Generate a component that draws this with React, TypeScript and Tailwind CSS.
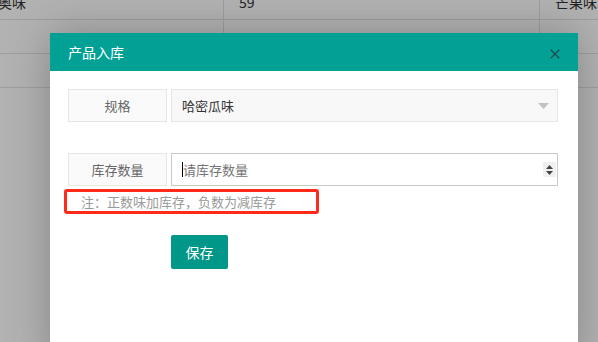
import React from 'react';
import { X } from 'lucide-react';

const font = { fontFamily: '"Noto Sans CJK SC", "Noto Sans", sans-serif' };

const App: React.FC = () => {
  return (
    <div className="relative w-[598px] h-[342px] overflow-hidden bg-white" style={font}>
      {/* Table underneath */}
      <div className="-mt-[14px] -ml-[16px] w-[640px] text-[14px] text-[#333]">
        <div className="flex h-[34px] border-b border-[#e2e2e2]">
          <div className="w-[240px] shrink-0 border-r border-[#e2e2e2] pt-[6px]">香奥味</div>
          <div className="w-[316px] shrink-0 border-r border-[#e2e2e2] pl-[15px] pt-[6px]">59</div>
          <div className="flex-1 pl-[15px] pt-[6px] whitespace-nowrap">芒果味:99</div>
        </div>
        <div className="flex h-[34px] border-b border-[#e2e2e2]">
          <div className="w-[240px] shrink-0 border-r border-[#e2e2e2]"></div>
          <div className="w-[316px] shrink-0 border-r border-[#e2e2e2]"></div>
          <div className="flex-1"></div>
        </div>
        <div className="flex h-[34px] border-b border-[#e2e2e2]">
          <div className="w-[240px] shrink-0 border-r border-[#e2e2e2]"></div>
          <div className="w-[316px] shrink-0 border-r border-[#e2e2e2]"></div>
          <div className="flex-1"></div>
        </div>
      </div>

      {/* Shade */}
      <div className="absolute inset-0 bg-black/30"></div>

      {/* Dialog */}
      <div className="absolute left-[50px] top-[33px] w-[528px] h-[330px] bg-white shadow-[0_0_40px_rgba(0,0,0,0.25)]">
        <div className="h-[38px] bg-[#03a096] flex items-center justify-between pl-[18px] pr-[15px]">
          <span className="text-[14px] text-white">产品入库</span>
          <X size={16} strokeWidth={1.7} className="text-[#24474a] mt-[3px]" />
        </div>

        <div className="pl-[18px] pr-[20px] pt-[18px]">
          <div className="flex h-[33px]">
            <div className="w-[99px] border border-[#e6e6e6] bg-[#fafafa] flex items-center justify-center text-[13px] text-[#666]">规格</div>
            <div className="ml-[4px] flex-1 border border-[#e6e6e6] bg-[#f8f8f8] flex items-center justify-between pl-[10px] pr-[8px] text-[13px] text-[#333]">
              <span>哈密瓜味</span>
              <svg width="11" height="6" viewBox="0 0 11 6"><path d="M0 0 H11 L5.5 6 Z" fill="#c2c2c2" /></svg>
            </div>
          </div>

          <div className="flex h-[33px] mt-[31px]">
            <div className="w-[99px] border border-[#e6e6e6] bg-[#fafafa] flex items-center justify-center text-[13px] text-[#666]">库存数量</div>
            <div className="ml-[4px] flex-1 border border-[#c9c9c9] bg-white flex items-center justify-between pl-[10px] pr-[1px] text-[13px]">
              <span className="flex items-center text-[#757575]">
                <span className="w-px h-[15px] bg-black"></span>
                <span>请库存数量</span>
              </span>
              <div className="w-[13px] h-[15px] bg-[#f0f0f0] flex flex-col items-center justify-center gap-[2px]">
                <svg width="7" height="4" viewBox="0 0 7 4"><path d="M0 4 L3.5 0 L7 4 Z" fill="#444" /></svg>
                <svg width="7" height="4" viewBox="0 0 7 4"><path d="M0 0 H7 L3.5 4 Z" fill="#444" /></svg>
              </div>
            </div>
          </div>

          <div className="-ml-[4px] mt-[3px] w-[255px] h-[25px] border-[3px] border-[#ff2a1a] rounded-[3px] flex items-center pl-[14px] text-[13px] text-[#999]">
            注：正数味加库存，负数为减库存
          </div>

          <div className="mt-[21px] pl-[103px]">
            <button className="w-[57px] h-[34px] bg-[#009688] rounded-[2px] text-[14px] text-white">保存</button>
          </div>
        </div>
      </div>
    </div>
  );
};

export default App;
